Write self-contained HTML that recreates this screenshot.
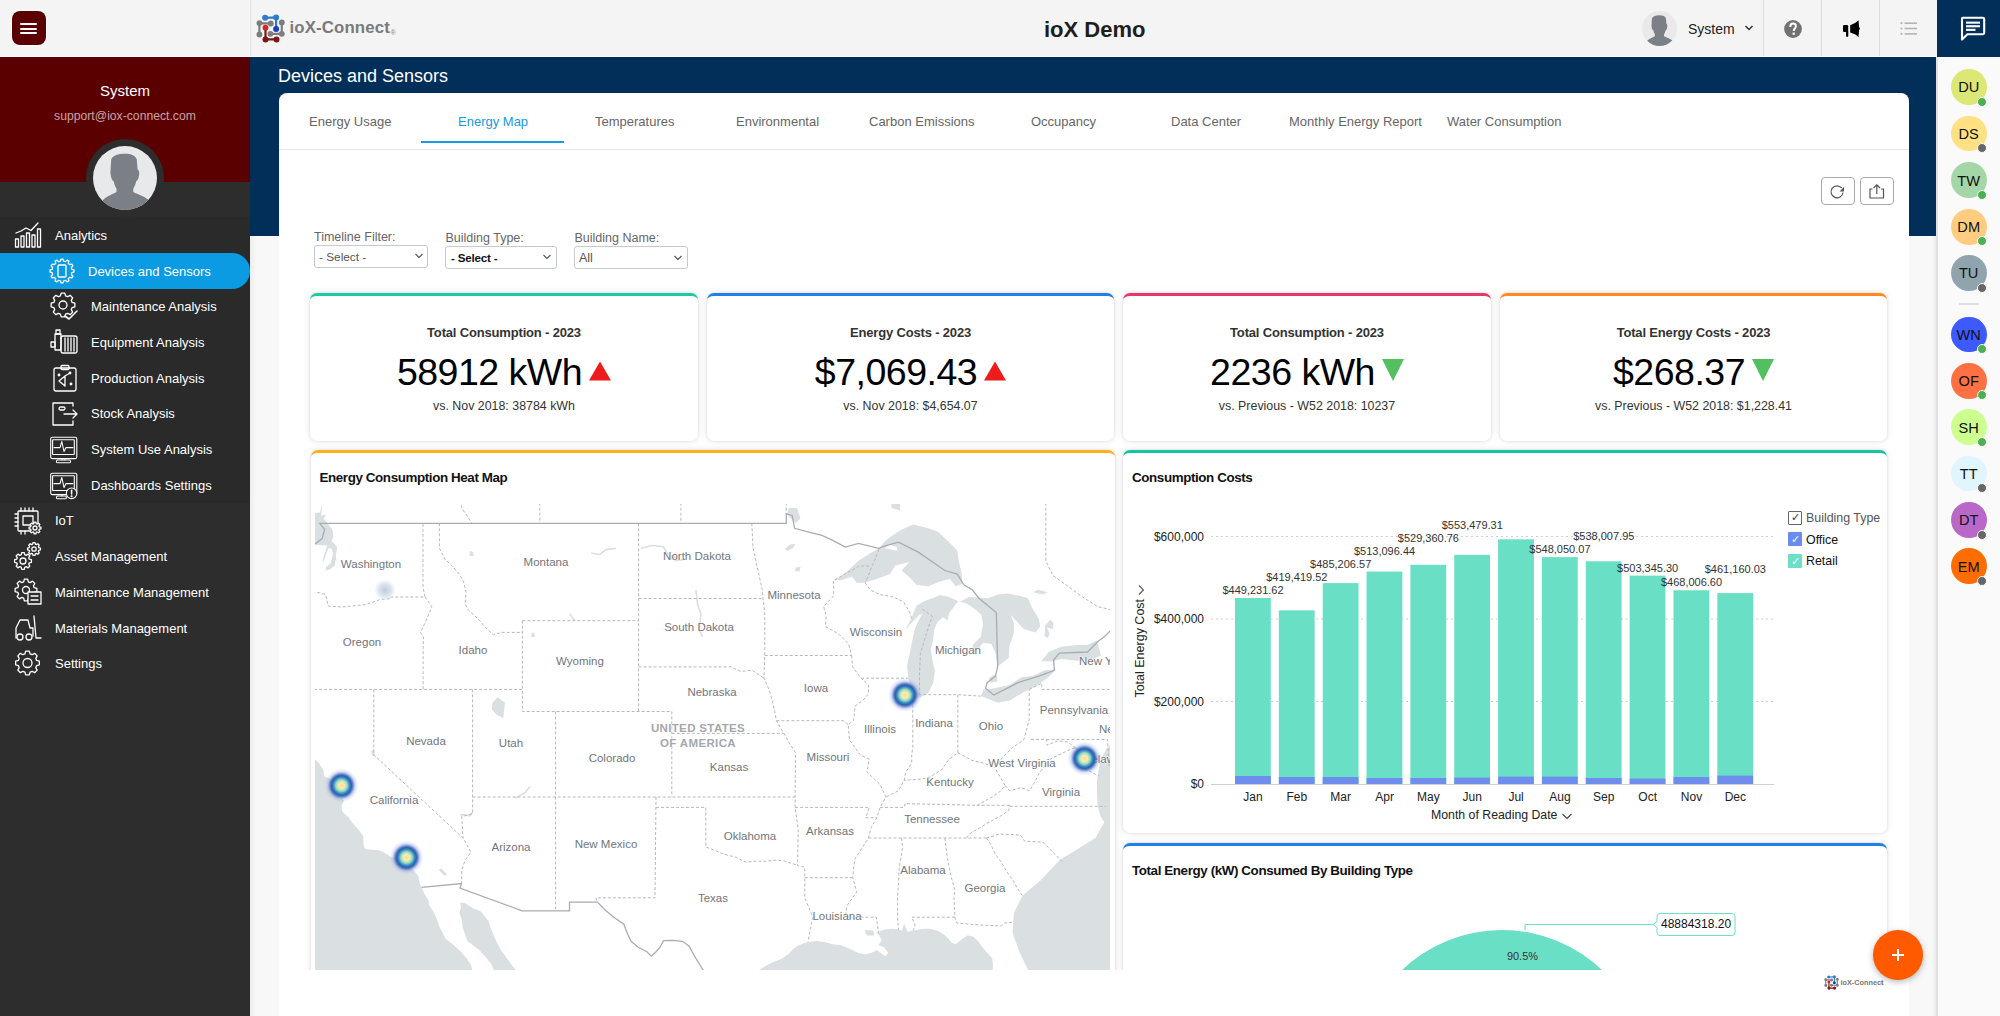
<!DOCTYPE html>
<html><head><meta charset="utf-8">
<style>
*{box-sizing:border-box;margin:0;padding:0}
html,body{width:2000px;height:1016px;overflow:hidden;background:#fff;font-family:"Liberation Sans",sans-serif}
.a{position:absolute}
.t{position:absolute;white-space:nowrap;line-height:1}
#hdr{left:0;top:0;width:1937px;height:56px;background:#f4f4f4}
#side{left:0;top:57px;width:250px;height:959px;background:#2d2d2d}
#banner{left:250px;top:57px;width:1687px;height:179px;background:#022f5a}
#rail{left:1937px;top:57px;width:63px;height:959px;background:#fafafa}
.card{position:absolute;background:#fff;border-radius:7px;box-shadow:0 0 3px rgba(0,0,0,.12),0 0 9px rgba(0,0,0,.08)}
.kt{font-weight:bold;font-size:13px;letter-spacing:-0.17px;color:#333;text-align:center;left:0;right:0}
.kv{font-size:37.5px;letter-spacing:-0.5px;color:#000;left:0;right:0;text-align:center}
.ks{font-size:12.4px;color:#333;left:0;right:0;text-align:center}
.tab{position:absolute;top:115px;font-size:13px;color:#666;white-space:nowrap;line-height:1}
.ml{position:absolute;width:120px;text-align:center;font-size:11.5px;color:#72767c;white-space:nowrap;line-height:1;text-shadow:0 0 2px #fff,0 0 2px #fff}
.us{font-weight:bold;letter-spacing:0.35px;color:#a3a8ad}
.mi{position:absolute;color:#fff;font-size:13px;white-space:nowrap;line-height:1}
</style></head><body>
<div class="a" id="hdr"></div>
<div class="a" style="left:0;top:56px;width:1937px;height:1px;background:#fff"></div>
<div class="a" id="side"></div>
<div class="a" style="left:0;top:57px;width:250px;height:125px;background:#5a0000"></div>
<div class="a" style="left:0;top:217px;width:250px;height:286px;background:#2a2a2a"></div>
<div class="a" id="banner"></div>
<div class="a" id="rail"></div>
<div class="a" style="left:1937px;top:0;width:63px;height:57px;background:#022f5a"></div>


<!-- header contents -->
<div class="a" style="left:12px;top:11px;width:34px;height:34px;background:#5a0000;border-radius:8px;box-shadow:0 0 0 1px #fff"></div>
<div class="a" style="left:20px;top:23px;width:17px;height:2px;background:#fff;border-radius:1px"></div>
<div class="a" style="left:20px;top:27.5px;width:17px;height:2px;background:#fff;border-radius:1px"></div>
<div class="a" style="left:20px;top:32px;width:17px;height:2px;background:#fff;border-radius:1px"></div>
<div class="a" style="left:250px;top:0;width:2px;height:56px;background:linear-gradient(90deg,#e0e0e0,#f4f4f4)"></div>
<svg class="a" style="left:252px;top:10px" width="38" height="36" viewBox="0 0 38 36"><g stroke-width="2.2" fill="none"><path d="M7.4 13.1 L18.8 13.5 M7.4 13.1 L7.4 24.5 M29.8 12.4 L29.8 23.8 L18.4 23.8" stroke="#7d7d7d"/><path d="M13.1 7.8 L24.1 7.4 L24.1 19.1" stroke="#2f78c8"/><path d="M13.5 17.7 L13.5 29.4 L24.5 29.4" stroke="#7a1616"/></g><g fill="#7d7d7d"><circle cx="7.4" cy="13.1" r="2.9"/><circle cx="18.8" cy="13.5" r="2.9"/><circle cx="7.4" cy="24.5" r="2.9"/><circle cx="29.8" cy="12.4" r="2.9"/><circle cx="29.8" cy="23.8" r="2.9"/><circle cx="18.4" cy="23.8" r="2.9"/></g><circle cx="13.1" cy="7.8" r="3" fill="#2f7ccf"/><circle cx="24.1" cy="7.4" r="3" fill="#2f7ccf"/><circle cx="24.1" cy="19.1" r="3" fill="#1b3fc0"/><circle cx="13.5" cy="17.7" r="2.9" fill="#d42424"/><circle cx="13.5" cy="29.4" r="3" fill="#7a1616"/><circle cx="24.5" cy="29.4" r="3" fill="#7a1616"/></svg>
<div class="t" style="left:289.5px;top:20px;font-size:16.8px;font-weight:bold;color:#7a7a7a;letter-spacing:0.15px">ioX-Connect</div>
<div class="t" style="left:390.5px;top:28.5px;font-size:7px;color:#888">&reg;</div>
<div class="t" style="left:1044px;top:18.5px;font-size:22px;font-weight:bold;color:#1e1e1e">ioX Demo</div>
<!-- user -->
<div class="a" style="left:1642px;top:11px;width:35px;height:35px;border-radius:50%;background:#e9e9eb;overflow:hidden">
 <svg width="35" height="35" viewBox="0 0 64 64"><path d="M18.2 13.5 C20 9.5 25 7.8 32 7.8 C38.5 7.8 42.5 9.8 43.8 13.5 L44.6 23.5 C46.3 24.2 46.6 27 46 29.5 C45.6 32.5 44.6 34.5 43.2 35.2 C42.6 38 41.6 40.5 40.3 42.5 L40.3 46 C45 48.5 52 50.5 57 55 L64 64 L0 64 L9 55 C13 50.5 19 48.5 23.5 46 L23.5 42.5 C22.2 40.5 21.2 38 20.6 35.2 C19.2 34.5 18.2 32.5 17.8 29.5 C17.2 27 17.5 24.2 17.6 23.5 Z" fill="#7b7f86"/></svg>
</div>
<div class="t" style="left:1688px;top:22px;font-size:14px;color:#222">System</div>
<svg class="a" style="left:1744px;top:24px" width="10" height="8" viewBox="0 0 10 8"><path d="M1.5 2 L5 5.5 L8.5 2" stroke="#333" stroke-width="1.5" fill="none"/></svg>
<div class="a" style="left:1763px;top:0;width:1px;height:56px;background:#dcdcdc"></div>
<div class="a" style="left:1821px;top:0;width:1px;height:56px;background:#dcdcdc"></div>
<div class="a" style="left:1879px;top:0;width:1px;height:56px;background:#dcdcdc"></div>
<svg class="a" style="left:1783.8px;top:19.6px" width="18" height="18" viewBox="0 0 18 18"><circle cx="9" cy="9" r="8.9" fill="#727272"/><path d="M6.3 7 C6.3 4.9 7.6 3.6 9.1 3.6 C10.8 3.6 11.9 4.7 11.9 6.3 C11.9 8.3 9.7 8.6 9.7 11" fill="none" stroke="#fff" stroke-width="2"/><rect x="8.6" y="12.6" width="2.2" height="2.2" fill="#fff"/></svg>

<svg class="a" style="left:1842px;top:19px" width="19" height="19" viewBox="0 0 19 19"><rect x="1" y="6" width="5.2" height="7" rx="1.3" fill="#000"/><rect x="4" y="11.5" width="2.3" height="6.4" rx="1.1" fill="#000"/><path d="M8.2 6.3 L13.5 3.8 L16.5 1.3 L17.1 8 L18 9.5 L17.1 11 L16.5 18.2 L13.5 15.6 L8.2 13.6 Z" fill="#000"/></svg>
<svg class="a" style="left:1900px;top:21px" width="18" height="15" viewBox="0 0 18 15"><g fill="#b5b5b5"><circle cx="1.5" cy="2.2" r="1.1"/><circle cx="1.5" cy="7.5" r="1.1"/><circle cx="1.5" cy="12.9" r="1.1"/><rect x="4.6" y="1.4" width="12.4" height="1.6"/><rect x="4.6" y="6.7" width="12.4" height="1.6"/><rect x="4.6" y="12.1" width="12.4" height="1.6"/></g></svg>
<svg class="a" style="left:1960px;top:15.5px" width="26" height="26" viewBox="0 0 26 26"><path d="M3 1.8 L22.8 1.8 Q24.2 1.8 24.2 3.2 L24.2 16.8 Q24.2 18.2 22.8 18.2 L7.4 18.2 L2 23.6 L2 2.8 Q2 1.8 3 1.8 Z" fill="none" stroke="#fff" stroke-width="2.1" stroke-linejoin="round"/><rect x="6" y="5.6" width="14" height="2.1" fill="#fff"/><rect x="6" y="9.2" width="14" height="2.1" fill="#fff"/><rect x="6" y="12.8" width="9.5" height="2.1" fill="#fff"/></svg>


<!-- sidebar -->
<div class="t" style="left:0;width:250px;text-align:center;top:82.5px;font-size:15px;color:#fff">System</div>
<div class="t" style="left:0;width:250px;text-align:center;top:109.5px;font-size:12.2px;color:#c9a3a3">support@iox-connect.com</div>
<div class="a" style="left:86px;top:139px;width:78px;height:78px;border-radius:50%;background:#2d2d2d"></div>
<div class="a" style="left:93px;top:146px;width:64px;height:64px;border-radius:50%;background:#e8e9eb;overflow:hidden">
 <svg width="64" height="64" viewBox="0 0 64 64"><path d="M18.2 13.5 C20 9.5 25 7.8 32 7.8 C38.5 7.8 42.5 9.8 43.8 13.5 L44.6 23.5 C46.3 24.2 46.6 27 46 29.5 C45.6 32.5 44.6 34.5 43.2 35.2 C42.6 38 41.6 40.5 40.3 42.5 L40.3 46 C45 48.5 52 50.5 57 55 L64 64 L0 64 L9 55 C13 50.5 19 48.5 23.5 46 L23.5 42.5 C22.2 40.5 21.2 38 20.6 35.2 C19.2 34.5 18.2 32.5 17.8 29.5 C17.2 27 17.5 24.2 17.6 23.5 Z" fill="#7b7f86"/></svg>
</div>
<div class="a" style="left:0;top:253px;width:250px;height:36px;background:#0a9be3;border-radius:0 18px 18px 0"></div>
<div class="mi" style="left:55px;top:229px">Analytics</div>
<div class="mi" style="left:88px;top:265px">Devices and Sensors</div>
<div class="mi" style="left:91px;top:300px">Maintenance Analysis</div>
<div class="mi" style="left:91px;top:336px">Equipment Analysis</div>
<div class="mi" style="left:91px;top:372px">Production Analysis</div>
<div class="mi" style="left:91px;top:407px">Stock Analysis</div>
<div class="mi" style="left:91px;top:443px">System Use Analysis</div>
<div class="mi" style="left:91px;top:479px">Dashboards Settings</div>
<div class="mi" style="left:55px;top:514px">IoT</div>
<div class="mi" style="left:55px;top:550px">Asset Management</div>
<div class="mi" style="left:55px;top:586px">Maintenance Management</div>
<div class="mi" style="left:55px;top:622px">Materials Management</div>
<div class="mi" style="left:55px;top:657px">Settings</div>
<svg class="a" style="left:14px;top:221px" width="28" height="28" viewBox="0 0 28 28" fill="none" stroke="#fff" stroke-width="1.3" stroke-linecap="round" stroke-linejoin="round"><rect x="1.5" y="18" width="3" height="8"/><rect x="7" y="15" width="3" height="11"/><rect x="12.5" y="12" width="3" height="14"/><rect x="18" y="14" width="3" height="12"/><rect x="23.5" y="8" width="3" height="18"/><path d="M2 12 L7 10 L12 7 L17 9.5 L24 2"/></svg>
<svg class="a" style="left:48px;top:257px" width="28" height="28" viewBox="0 0 28 28" fill="none" stroke="#fff" stroke-width="1.3" stroke-linecap="round" stroke-linejoin="round"><path d="M23.88 12.44 L25.96 12.96 L25.96 15.04 L23.88 15.56 L23.34 17.58 L24.87 19.08 L23.84 20.87 L21.77 20.29 L20.29 21.77 L20.87 23.84 L19.08 24.87 L17.58 23.34 L15.56 23.88 L15.04 25.96 L12.96 25.96 L12.44 23.88 L10.42 23.34 L8.92 24.87 L7.13 23.84 L7.71 21.77 L6.23 20.29 L4.16 20.87 L3.13 19.08 L4.66 17.58 L4.12 15.56 L2.04 15.04 L2.04 12.96 L4.12 12.44 L4.66 10.42 L3.13 8.92 L4.16 7.13 L6.23 7.71 L7.71 6.23 L7.13 4.16 L8.92 3.13 L10.42 4.66 L12.44 4.12 L12.96 2.04 L15.04 2.04 L15.56 4.12 L17.58 4.66 L19.08 3.13 L20.87 4.16 L20.29 6.23 L21.77 7.71 L23.84 7.13 L24.87 8.92 L23.34 10.42Z"/><rect x="10" y="8" width="8" height="12" rx="1"/></svg>
<svg class="a" style="left:50px;top:292px" width="28" height="28" viewBox="0 0 28 28" fill="none" stroke="#fff" stroke-width="1.3" stroke-linecap="round" stroke-linejoin="round"><path d="M22.14 10.42 L24.86 11.19 L24.86 14.81 L22.14 15.58 L21.29 17.64 L22.67 20.11 L20.11 22.67 L17.64 21.29 L15.58 22.14 L14.81 24.86 L11.19 24.86 L10.42 22.14 L8.36 21.29 L5.89 22.67 L3.33 20.11 L4.71 17.64 L3.86 15.58 L1.14 14.81 L1.14 11.19 L3.86 10.42 L4.71 8.36 L3.33 5.89 L5.89 3.33 L8.36 4.71 L10.42 3.86 L11.19 1.14 L14.81 1.14 L15.58 3.86 L17.64 4.71 L20.11 3.33 L22.67 5.89 L21.29 8.36Z"/><circle cx="13" cy="13" r="4"/><path d="M15 24 L19 27 L27 19" stroke-width="1.6"/></svg>
<svg class="a" style="left:50px;top:328px" width="28" height="28" viewBox="0 0 28 28" fill="none" stroke="#fff" stroke-width="1.3" stroke-linecap="round" stroke-linejoin="round"><rect x="11" y="8" width="16" height="17" rx="2"/><path d="M15 10 L15 23 M18 10 L18 23 M21 10 L21 23 M24 10 L24 23"/><rect x="5" y="6" width="6" height="16"/><rect x="1" y="14" width="4" height="5"/><rect x="6" y="2" width="4" height="4"/></svg>
<svg class="a" style="left:51px;top:364px" width="28" height="28" viewBox="0 0 28 28" fill="none" stroke="#fff" stroke-width="1.3" stroke-linecap="round" stroke-linejoin="round"><rect x="3" y="4" width="22" height="23" rx="2"/><rect x="10" y="1.5" width="8" height="4" rx="1"/><path d="M8 17 L14 12 L19 9 M14 12 L14 22 M8 17 L14 22"/><circle cx="19" cy="9" r="0.8"/><circle cx="8" cy="11" r="0.8"/><circle cx="20" cy="20" r="0.8"/></svg>
<svg class="a" style="left:51px;top:400px" width="28" height="28" viewBox="0 0 28 28" fill="none" stroke="#fff" stroke-width="1.3" stroke-linecap="round" stroke-linejoin="round"><path d="M22 6 L22 3 L2 3 L2 25 L22 25 L22 21"/><rect x="8" y="7" width="6" height="3" rx="1.5"/><path d="M13 14 L26 14 M22 10 L26 14 L22 18"/></svg>
<svg class="a" style="left:50px;top:436px" width="28" height="28" viewBox="0 0 28 28" fill="none" stroke="#fff" stroke-width="1.1" stroke-linecap="round" stroke-linejoin="round"><rect x="0.7" y="1.2" width="26.1" height="21.4" rx="1.5"/><rect x="2.6" y="3.7" width="21.7" height="14.8" rx="0.5"/><path d="M4 11.6 L10 11.6 L11.8 5.5 L14 15.5 L16 11.6 L23 11.6"/><path d="M12 22.6 L12 24 M15 22.6 L15 24"/><rect x="6.4" y="24" width="14.2" height="2.8" rx="1.4"/></svg>
<svg class="a" style="left:50px;top:472px" width="30" height="30" viewBox="0 0 30 30" fill="none" stroke="#fff" stroke-width="1.1" stroke-linecap="round" stroke-linejoin="round"><rect x="0.7" y="1.2" width="26.1" height="21.4" rx="1.5"/><rect x="2.6" y="3.7" width="21.7" height="14.8" rx="0.5"/><path d="M4 11.6 L10 11.6 L11.8 5.5 L14 15.5 L16 11.6 L23 11.6"/><path d="M12 22.6 L12 24"/><rect x="6.4" y="24" width="10" height="2.8" rx="1.4"/><circle cx="21.6" cy="21.3" r="5.3" fill="#2a2a2a"/><path d="M21.6 18.3 L21.6 22" stroke-width="1.5"/><circle cx="21.6" cy="24.2" r="0.5" fill="#fff"/></svg>
<svg class="a" style="left:14px;top:507px" width="28" height="28" viewBox="0 0 28 28" fill="none" stroke="#fff" stroke-width="1.3" stroke-linecap="round" stroke-linejoin="round"><rect x="4" y="4" width="20" height="20" rx="1"/><rect x="9" y="9" width="10" height="9"/><path d="M7 1 L7 4 M11 1 L11 4 M15 1 L15 4 M19 1 L19 4 M1 7 L4 7 M1 11 L4 11 M1 15 L4 15 M1 19 L4 19 M7 24 L7 27 M11 24 L11 27"/><path d="M25.33 19.78 L26.93 20.10 L26.93 21.90 L25.33 22.22 L24.93 23.20 L25.83 24.56 L24.56 25.83 L23.20 24.93 L22.22 25.33 L21.90 26.93 L20.10 26.93 L19.78 25.33 L18.80 24.93 L17.44 25.83 L16.17 24.56 L17.07 23.20 L16.67 22.22 L15.07 21.90 L15.07 20.10 L16.67 19.78 L17.07 18.80 L16.17 17.44 L17.44 16.17 L18.80 17.07 L19.78 16.67 L20.10 15.07 L21.90 15.07 L22.22 16.67 L23.20 17.07 L24.56 16.17 L25.83 17.44 L24.93 18.80Z" fill="#2d2d2d"/><circle cx="21" cy="21" r="2"/></svg>
<svg class="a" style="left:14px;top:542px" width="28" height="28" viewBox="0 0 28 28" fill="none" stroke="#fff" stroke-width="1.3" stroke-linecap="round" stroke-linejoin="round"><path d="M15.26 17.24 L17.40 17.72 L17.40 20.28 L15.26 20.76 L14.67 22.18 L15.85 24.04 L14.04 25.85 L12.18 24.67 L10.76 25.26 L10.28 27.40 L7.72 27.40 L7.24 25.26 L5.82 24.67 L3.96 25.85 L2.15 24.04 L3.33 22.18 L2.74 20.76 L0.60 20.28 L0.60 17.72 L2.74 17.24 L3.33 15.82 L2.15 13.96 L3.96 12.15 L5.82 13.33 L7.24 12.74 L7.72 10.60 L10.28 10.60 L10.76 12.74 L12.18 13.33 L14.04 12.15 L15.85 13.96 L14.67 15.82Z"/><circle cx="9" cy="19" r="3"/><path d="M24.81 5.64 L26.43 6.02 L26.43 7.98 L24.81 8.36 L24.36 9.44 L25.24 10.85 L23.85 12.24 L22.44 11.36 L21.36 11.81 L20.98 13.43 L19.02 13.43 L18.64 11.81 L17.56 11.36 L16.15 12.24 L14.76 10.85 L15.64 9.44 L15.19 8.36 L13.57 7.98 L13.57 6.02 L15.19 5.64 L15.64 4.56 L14.76 3.15 L16.15 1.76 L17.56 2.64 L18.64 2.19 L19.02 0.57 L20.98 0.57 L21.36 2.19 L22.44 2.64 L23.85 1.76 L25.24 3.15 L24.36 4.56Z"/><circle cx="20" cy="7" r="2.2"/></svg>
<svg class="a" style="left:14px;top:578px" width="28" height="28" viewBox="0 0 28 28" fill="none" stroke="#fff" stroke-width="1.3" stroke-linecap="round" stroke-linejoin="round"><path d="M20.18 9.69 L22.87 10.34 L22.87 13.66 L20.18 14.31 L19.42 16.15 L20.86 18.52 L18.52 20.86 L16.15 19.42 L14.31 20.18 L13.66 22.87 L10.34 22.87 L9.69 20.18 L7.85 19.42 L5.48 20.86 L3.14 18.52 L4.58 16.15 L3.82 14.31 L1.13 13.66 L1.13 10.34 L3.82 9.69 L4.58 7.85 L3.14 5.48 L5.48 3.14 L7.85 4.58 L9.69 3.82 L10.34 1.13 L13.66 1.13 L14.31 3.82 L16.15 4.58 L18.52 3.14 L20.86 5.48 L19.42 7.85Z"/><circle cx="12" cy="12" r="3.5"/><rect x="14" y="14" width="13" height="12" fill="#2d2d2d"/><path d="M17 18 L24 18 M17 22 L24 22"/></svg>
<svg class="a" style="left:14px;top:614px" width="28" height="28" viewBox="0 0 28 28" fill="none" stroke="#fff" stroke-width="1.3" stroke-linecap="round" stroke-linejoin="round"><path d="M2 24 L2 14 L6 6 L14 6 L16 14 L19 14 L19 22"/><circle cx="6" cy="23" r="3"/><circle cx="15" cy="23" r="3"/><path d="M20 2 L22 24 L27 24"/></svg>
<svg class="a" style="left:15px;top:650px" width="28" height="28" viewBox="0 0 28 28" fill="none" stroke="#fff" stroke-width="1.3" stroke-linecap="round" stroke-linejoin="round"><path d="M21.64 10.42 L24.36 11.19 L24.36 14.81 L21.64 15.58 L20.79 17.64 L22.17 20.11 L19.61 22.67 L17.14 21.29 L15.08 22.14 L14.31 24.86 L10.69 24.86 L9.92 22.14 L7.86 21.29 L5.39 22.67 L2.83 20.11 L4.21 17.64 L3.36 15.58 L0.64 14.81 L0.64 11.19 L3.36 10.42 L4.21 8.36 L2.83 5.89 L5.39 3.33 L7.86 4.71 L9.92 3.86 L10.69 1.14 L14.31 1.14 L15.08 3.86 L17.14 4.71 L19.61 3.33 L22.17 5.89 L20.79 8.36Z"/><circle cx="12.5" cy="13" r="4.5"/></svg>

<div class="a" style="left:250px;top:236px;width:1687px;height:780px;background:#f8f8f8"></div>
<div class="a" style="left:250px;top:236px;width:6px;height:780px;background:linear-gradient(90deg,#ececec,#f8f8f8)"></div>
<div class="a" style="left:1932px;top:236px;width:5px;height:780px;background:linear-gradient(90deg,#f8f8f8,#e8e8e8)"></div>
<div class="t" style="left:278px;top:67px;font-size:18px;color:#fff">Devices and Sensors</div>
<div class="a" style="left:1936px;top:57px;width:2px;height:959px;background:#e2e2e2"></div>
<div class="a" style="left:1950.8px;top:69.1px;width:35.8px;height:35.8px;border-radius:50%;background:#dce775"></div><div class="t" style="left:1950.8px;width:35.8px;text-align:center;top:80.3px;font-size:14.6px;color:#111">DU</div><div class="a" style="left:1977.2px;top:96.5px;width:10px;height:10px;border-radius:50%;background:#4caf50;border:1.2px solid #fafafa"></div>
<div class="a" style="left:1950.8px;top:115.6px;width:35.8px;height:35.8px;border-radius:50%;background:#ffe082"></div><div class="t" style="left:1950.8px;width:35.8px;text-align:center;top:126.8px;font-size:14.6px;color:#111">DS</div><div class="a" style="left:1977.2px;top:143.0px;width:10px;height:10px;border-radius:50%;background:#666;border:1.2px solid #fafafa"></div>
<div class="a" style="left:1950.8px;top:162.4px;width:35.8px;height:35.8px;border-radius:50%;background:#a5d6a7"></div><div class="t" style="left:1950.8px;width:35.8px;text-align:center;top:173.6px;font-size:14.6px;color:#111">TW</div><div class="a" style="left:1977.2px;top:189.8px;width:10px;height:10px;border-radius:50%;background:#4caf50;border:1.2px solid #fafafa"></div>
<div class="a" style="left:1950.8px;top:208.9px;width:35.8px;height:35.8px;border-radius:50%;background:#ffcc80"></div><div class="t" style="left:1950.8px;width:35.8px;text-align:center;top:220.1px;font-size:14.6px;color:#111">DM</div><div class="a" style="left:1977.2px;top:236.3px;width:10px;height:10px;border-radius:50%;background:#4caf50;border:1.2px solid #fafafa"></div>
<div class="a" style="left:1950.8px;top:255.1px;width:35.8px;height:35.8px;border-radius:50%;background:#90a4ae"></div><div class="t" style="left:1950.8px;width:35.8px;text-align:center;top:266.3px;font-size:14.6px;color:#111">TU</div><div class="a" style="left:1977.2px;top:282.5px;width:10px;height:10px;border-radius:50%;background:#666;border:1.2px solid #fafafa"></div>
<div class="a" style="left:1950.8px;top:316.6px;width:35.8px;height:35.8px;border-radius:50%;background:#3d5afe"></div><div class="t" style="left:1950.8px;width:35.8px;text-align:center;top:327.8px;font-size:14.6px;color:#111">WN</div><div class="a" style="left:1977.2px;top:344.0px;width:10px;height:10px;border-radius:50%;background:#4caf50;border:1.2px solid #fafafa"></div>
<div class="a" style="left:1950.8px;top:362.8px;width:35.8px;height:35.8px;border-radius:50%;background:#ff7043"></div><div class="t" style="left:1950.8px;width:35.8px;text-align:center;top:374.0px;font-size:14.6px;color:#111">OF</div><div class="a" style="left:1977.2px;top:390.2px;width:10px;height:10px;border-radius:50%;background:#4caf50;border:1.2px solid #fafafa"></div>
<div class="a" style="left:1950.8px;top:409.40000000000003px;width:35.8px;height:35.8px;border-radius:50%;background:#ccff90"></div><div class="t" style="left:1950.8px;width:35.8px;text-align:center;top:420.6px;font-size:14.6px;color:#111">SH</div><div class="a" style="left:1977.2px;top:436.8px;width:10px;height:10px;border-radius:50%;background:#4caf50;border:1.2px solid #fafafa"></div>
<div class="a" style="left:1950.8px;top:455.70000000000005px;width:35.8px;height:35.8px;border-radius:50%;background:#e1f5fe"></div><div class="t" style="left:1950.8px;width:35.8px;text-align:center;top:466.9px;font-size:14.6px;color:#111">TT</div><div class="a" style="left:1977.2px;top:483.1px;width:10px;height:10px;border-radius:50%;background:#666;border:1.2px solid #fafafa"></div>
<div class="a" style="left:1950.8px;top:502.1px;width:35.8px;height:35.8px;border-radius:50%;background:#ba68c8"></div><div class="t" style="left:1950.8px;width:35.8px;text-align:center;top:513.3px;font-size:14.6px;color:#111">DT</div><div class="a" style="left:1977.2px;top:529.5px;width:10px;height:10px;border-radius:50%;background:#666;border:1.2px solid #fafafa"></div>
<div class="a" style="left:1950.8px;top:548.4px;width:35.8px;height:35.8px;border-radius:50%;background:#ff6d00"></div><div class="t" style="left:1950.8px;width:35.8px;text-align:center;top:559.6px;font-size:14.6px;color:#111">EM</div><div class="a" style="left:1977.2px;top:575.8px;width:10px;height:10px;border-radius:50%;background:#666;border:1.2px solid #fafafa"></div>
<div class="a" style="left:1959px;top:303px;width:20px;height:1.5px;background:#e0e0e0"></div>
<!-- main card -->
<div class="a" style="left:278.7px;top:93px;width:1630px;height:940px;background:#fff;border-radius:8px"></div>
<div class="a" style="left:278.7px;top:149px;width:1630px;height:1px;background:#e6e6e6"></div>


<!-- tabs -->
<div class="tab" style="left:309px">Energy Usage</div>
<div class="tab" style="left:458px;color:#1a9ae0">Energy Map</div>
<div class="tab" style="left:595px">Temperatures</div>
<div class="tab" style="left:736px">Environmental</div>
<div class="tab" style="left:869px">Carbon Emissions</div>
<div class="tab" style="left:1031px">Occupancy</div>
<div class="tab" style="left:1171px">Data Center</div>
<div class="tab" style="left:1289px">Monthly Energy Report</div>
<div class="tab" style="left:1447px">Water Consumption</div>
<div class="a" style="left:421px;top:140.5px;width:143px;height:2px;background:#1a9ae0"></div>
<!-- buttons -->
<div class="a" style="left:1821px;top:177px;width:34px;height:28px;border:1.5px solid #aaa;border-radius:4px"></div>
<div class="a" style="left:1860px;top:177px;width:34px;height:28px;border:1.5px solid #aaa;border-radius:4px"></div>
<svg class="a" style="left:1829px;top:183px" width="18" height="18" viewBox="0 0 18 18"><path d="M14 9.5 A6 6 0 1 1 12.8 5.2" fill="none" stroke="#555" stroke-width="1.2"/><path d="M15 4 L15 8.5 L10.5 8.5 Z" fill="#555"/></svg>
<svg class="a" style="left:1868px;top:183px" width="18" height="18" viewBox="0 0 18 18"><path d="M4.5 6 L2 6 L2 15 L15.5 15 L15.5 6 L13 6" fill="none" stroke="#555" stroke-width="1.2"/><path d="M8.8 11 L8.8 2 M5.5 5 L8.8 1.8 L12 5" fill="none" stroke="#555" stroke-width="1.2"/></svg>
<!-- filters -->
<div class="t" style="left:314px;top:231px;font-size:12.5px;color:#666">Timeline Filter:</div>
<div class="t" style="left:445.5px;top:231.5px;font-size:12.5px;color:#666">Building Type:</div>
<div class="t" style="left:574.5px;top:231.5px;font-size:12.5px;color:#666">Building Name:</div>
<div class="a" style="left:314px;top:245px;width:114px;height:23px;border:1px solid #c5c9d2;border-radius:3px"></div>
<div class="a" style="left:445px;top:246px;width:111.5px;height:22.5px;border:1px solid #c5c9d2;border-radius:3px"></div>
<div class="a" style="left:574px;top:246px;width:114px;height:22.5px;border:1px solid #c5c9d2;border-radius:3px"></div>
<div class="t" style="left:319px;top:251.5px;font-size:11.8px;color:#555">- Select -</div>
<div class="t" style="left:451px;top:252px;font-size:11.6px;color:#111;font-weight:bold;letter-spacing:-0.2px">- Select -</div>
<div class="t" style="left:579px;top:251.5px;font-size:12.5px;color:#555">All</div>
<svg class="a" style="left:414px;top:252px" width="10" height="8" viewBox="0 0 10 8"><path d="M1.5 2 L5 5.5 L8.5 2" stroke="#555" stroke-width="1.1" fill="none"/></svg>
<svg class="a" style="left:542px;top:253px" width="10" height="8" viewBox="0 0 10 8"><path d="M1.5 2 L5 5.5 L8.5 2" stroke="#555" stroke-width="1.1" fill="none"/></svg>
<svg class="a" style="left:673px;top:254px" width="10" height="8" viewBox="0 0 10 8"><path d="M1.5 2 L5 5.5 L8.5 2" stroke="#555" stroke-width="1.1" fill="none"/></svg>
<div class="card" style="left:310px;top:293px;width:388px;height:148px;border-top:3px solid #1ec9a4">
 <div class="t kt" style="top:30px">Total Consumption - 2023</div>
 <div class="t kv" style="top:57.5px">58912 kWh<svg width="22" height="20" viewBox="0 0 22 20" style="display:inline-block;vertical-align:0;margin-left:7px;position:relative;top:-3.5px"><path d="M11 0.5 L22 19.5 L0 19.5 Z" fill="#ee1c1c"/></svg></div>
 <div class="t ks" style="top:104px">vs. Nov 2018: 38784 kWh</div>
</div>
<div class="card" style="left:707px;top:293px;width:407px;height:148px;border-top:3px solid #1f80e8">
 <div class="t kt" style="top:30px">Energy Costs - 2023</div>
 <div class="t kv" style="top:57.5px">$7,069.43<svg width="22" height="20" viewBox="0 0 22 20" style="display:inline-block;vertical-align:0;margin-left:7px;position:relative;top:-3.5px"><path d="M11 0.5 L22 19.5 L0 19.5 Z" fill="#ee1c1c"/></svg></div>
 <div class="t ks" style="top:104px">vs. Nov 2018: $4,654.07</div>
</div>
<div class="card" style="left:1123px;top:293px;width:368px;height:148px;border-top:3px solid #e8386a">
 <div class="t kt" style="top:30px">Total Consumption - 2023</div>
 <div class="t kv" style="top:57.5px">2236 kWh<svg width="22" height="22" viewBox="0 0 22 22" style="display:inline-block;vertical-align:0;margin-left:7px;position:relative;top:-3.5px"><path d="M0 0 L22 0 L11 22 Z" fill="#52c05e"/></svg></div>
 <div class="t ks" style="top:104px">vs. Previous - W52 2018: 10237</div>
</div>
<div class="card" style="left:1500px;top:293px;width:387px;height:148px;border-top:3px solid #ff8a22">
 <div class="t kt" style="top:30px">Total Energy Costs - 2023</div>
 <div class="t kv" style="top:57.5px">$268.37<svg width="22" height="22" viewBox="0 0 22 22" style="display:inline-block;vertical-align:0;margin-left:7px;position:relative;top:-3.5px"><path d="M0 0 L22 0 L11 22 Z" fill="#52c05e"/></svg></div>
 <div class="t ks" style="top:104px">vs. Previous - W52 2018: $1,228.41</div>
</div>

<!-- dashboard clip -->
<div class="a" style="left:278px;top:445px;width:1631px;height:525px;overflow:hidden">
 <div class="card" style="left:32.5px;top:5px;width:804px;height:560px;border-top:3px solid #ffb21e"></div>
 <div class="card" style="left:845px;top:5px;width:764px;height:383px;border-top:3px solid #16c3a2"></div>
 <div class="card" style="left:845px;top:398px;width:764px;height:300px;border-top:3px solid #1f80e8"></div>
 <div id="mapwrap" class="a" style="left:37px;top:59px;width:795px;height:470px;overflow:hidden;background:#fff"></div>
 <div class="a" style="left:0;top:0;width:1631px;height:525px" id="dash"></div>
</div>
<!--MAP--><svg class="a" style="left:315px;top:504px" width="795" height="466" viewBox="315 504 795 466">
<defs><radialGradient id="hs"><stop offset="0" stop-color="#fddc9a"/><stop offset="0.18" stop-color="#fbeab2"/><stop offset="0.34" stop-color="#8fdcc0"/><stop offset="0.46" stop-color="#3f92c4"/><stop offset="0.58" stop-color="#2a5eb2"/><stop offset="0.68" stop-color="#3f66bb" stop-opacity="0.75"/><stop offset="0.82" stop-color="#7f9ade" stop-opacity="0.3"/><stop offset="1" stop-color="#a0b4e8" stop-opacity="0"/></radialGradient><radialGradient id="hs2"><stop offset="0" stop-color="#b8c4dc" stop-opacity="0.9"/><stop offset="0.6" stop-color="#c8d2e6" stop-opacity="0.6"/><stop offset="1" stop-color="#dde4f0" stop-opacity="0"/></radialGradient></defs>
<path d="M299.1 744.2L311.9 755.9L319.1 763.4L323.2 769.8L324.0 776.3L329.0 778.2L332.0 780.3L332.3 786.6L334.0 792.8L339.8 798.1L342.3 797.6L344.0 801.2L341.5 805.3L342.3 811.5L348.9 817.7L353.9 824.8L358.9 829.9L363.0 836.0L363.5 843.1L363.9 847.1L366.0 849.2L373.8 849.8L378.8 850.2L385.5 853.2L391.3 857.2L397.1 857.8L399.6 859.2L400.1 863.2L404.5 863.8L408.7 866.2L413.7 870.2L418.3 876.1L419.5 883.0L421.6 887.4L424.5 893.9L428.6 900.7L429.4 905.6L434.4 913.4L436.9 919.2L439.4 926.9L442.7 932.7L445.2 938.4L452.7 944.2L461.0 951.8L467.6 959.4L470.9 965.0L473.4 974.5L473.4 993.2L299.1 993.2Z" fill="#dadfe1"/>
<path d="M460.2 902.7L461.0 907.5L459.3 913.4L461.8 919.2L462.6 926.9L465.1 934.6L467.6 941.3L479.2 949.9L485.1 956.5L490.9 963.2L494.2 970.7L506.6 993.2L531.5 993.2L519.9 974.5L511.6 965.0L507.6 959.0L500.8 949.9L495.0 938.4L490.9 928.8L488.4 921.1L480.9 911.4L473.4 908.5L464.3 902.7Z" fill="#dadfe1"/>
<path d="M750.7 993.2L754.0 974.5L759.0 969.9L765.6 966.0L773.1 962.2L782.2 958.4L788.8 953.7L792.2 949.9L797.1 946.1L803.8 943.2L807.9 941.9L817.1 940.9L825.4 942.2L833.7 944.5L840.3 945.1L850.2 948.9L857.7 952.7L865.2 954.6L871.8 952.7L876.8 949.9L881.8 953.7L885.1 956.5L888.4 952.7L883.5 947.0L878.5 945.1L881.8 940.3L879.3 935.5L876.0 932.7L883.5 929.8L891.8 928.8L897.6 929.2L901.7 930.7L904.2 924.0L907.5 931.7L913.3 930.7L923.3 928.8L929.9 928.8L938.2 931.1L944.0 934.6L948.2 938.4L951.5 942.6L955.7 944.2L961.5 939.4L967.3 935.5L973.1 936.5L978.1 941.3L982.2 947.0L987.2 952.7L992.2 958.4L993.0 965.0L992.2 974.5L996.3 993.2L750.7 993.2Z" fill="#dadfe1"/>
<path d="M1034.5 993.2L1027.5 968.4L1020.1 953.5L1012.6 933.2L1013.8 913.2L1022.6 895.6L1040.2 880.7L1060.2 859.4L1075.3 850.6L1095.4 838.0L1105.4 820.3L1110.0 802.8L1137.4 802.8L1137.4 993.2Z" fill="#dadfe1"/>
<path d="M1112.0 744.0L1107.0 748.0L1102.0 757.0L1099.0 768.0L1097.0 780.0L1097.0 792.0L1097.5 805.0L1100.0 815.0L1104.0 822.0L1112.0 822.0Z" fill="#dadfe1"/>
<path d="M837.0 579.0L845.3 572.9L858.6 560.7L870.2 553.3L879.3 548.3L885.1 540.9L890.1 537.1L901.7 529.6L913.3 524.6L928.3 528.3L938.2 532.1L951.5 544.6L957.3 550.8L959.0 561.9L961.5 572.9L962.3 583.8L955.7 586.2L949.9 579.0L939.9 581.4L928.3 586.2L916.7 585.0L910.0 577.8L901.7 570.5L909.2 561.9L895.1 565.6L890.1 574.1L878.5 578.3L865.2 582.6L856.9 583.1L851.9 576.6L839.5 580.7Z" fill="#dadfe1"/>
<path d="M958.5 601.3L949.0 597.0L939.9 595.1L932.4 598.2L924.1 601.3L916.7 605.4L911.7 617.2L905.0 631.2L909.2 625.4L919.1 614.8L922.5 613.6L917.5 623.1L914.2 631.2L912.5 639.4L909.7 653.2L907.0 665.7L908.4 678.2L911.3 691.6L914.2 697.2L920.0 697.8L928.3 692.7L933.2 682.7L934.9 671.4L932.4 660.0L930.8 649.7L933.2 639.4L934.1 630.1L937.4 621.9L943.2 617.2L947.4 620.7L949.0 613.6L954.0 606.6L957.3 602.3Z" fill="#dadfe1"/>
<path d="M959.8 601.8L968.9 597.0L978.1 597.5L988.0 598.2L998.0 594.6L1008.0 593.4L1019.6 595.8L1027.9 598.2L1032.0 607.7L1038.7 618.4L1040.3 626.6L1035.3 632.4L1023.7 628.9L1010.4 614.8L1013.8 623.1L1013.8 633.6L1009.3 646.3L1008.8 657.8L997.7 666.4L995.5 653.2L991.4 644.0L983.1 642.8L979.7 647.4L973.1 653.2L972.8 645.1L980.6 637.0L983.1 624.2L981.4 614.8L974.8 608.9L965.6 603.0Z" fill="#dadfe1"/>
<path d="M1056.1 669.6L1048.6 677.0L1036.2 686.0L1024.6 691.6L1009.6 700.5L998.0 702.7L989.7 699.4L980.6 696.1L983.9 689.4L994.7 688.3L1009.6 684.9L1022.1 677.0L1032.9 675.9L1044.5 670.3Z" fill="#dadfe1"/>
<path d="M1041.2 661.2L1048.6 652.0L1061.1 646.7L1077.7 645.1L1087.6 645.1L1096.8 640.5L1100.9 655.5L1091.0 660.0L1077.7 660.7L1061.1 658.9L1052.8 661.2Z" fill="#dadfe1"/>
<path d="M993.8 674.8L997.2 675.9L997.2 681.5L990.5 682.7L988.9 678.2Z" fill="#dadfe1"/>
<path d="M497.5 697.2L505.0 702.7L504.1 710.4L503.3 718.1L496.7 714.8L491.7 709.3L492.5 702.7Z" fill="#dadfe1"/>
<path d="M864.4 929.8L873.5 930.7L874.3 935.5L866.9 935.5Z" fill="#dadfe1"/>
<path d="M787.2 514.4L795.5 523.3L800.5 518.2L797.1 508.0L788.8 508.0Z" fill="#dadfe1"/>
<path d="M310.0 513.4L319.9 512.6L321.4 507.1L322.2 507.5L320.9 515.7L326.2 514.6L323.5 518.5L327.0 522.8L332.5 529.9L333.3 537.0L331.5 540.9L336.4 545.7L337.2 548.8L335.6 555.1L334.8 565.4L330.1 569.3L325.4 570.6L326.2 566.9L330.9 563.0L333.0 553.5L331.7 548.8L328.5 548.0L324.5 559.0L322.8 563.0L323.2 558.0L327.2 545.5L316.0 545.0L310.0 545.0Z" fill="#dadfe1"/>
<path d="M785.0 549.0L790.0 544.5L795.5 544.0L793.0 548.0L787.0 551.0Z" fill="#dadfe1"/>
<path d="M795.0 571.0L796.0 567.5L800.5 566.8L799.5 571.6Z" fill="#dadfe1"/>
<path d="M668.0 557.0L672.0 555.0L678.0 557.5L673.0 559.5Z" fill="#dadfe1"/>
<path d="M1050.3 619.5L1053.6 623.1L1052.8 628.9L1047.0 627.7L1049.5 633.6L1047.8 638.2L1044.5 635.9L1045.3 625.4Z" fill="#dadfe1"/>
<path d="M1037.8 589.8L1047.8 592.2L1042.8 594.6L1032.9 592.2Z" fill="#dadfe1"/>
<path d="M472.6 552.1L474.3 555.8L469.3 555.8L470.1 550.8Z" fill="#dadfe1"/>
<path d="M534.0 632.4L534.9 637.0L531.5 637.0L531.5 633.6Z" fill="#dadfe1"/>
<path d="M373.8 749.5L375.0 755.9L372.2 755.9L371.3 750.6Z" fill="#dadfe1"/>
<path d="M441.1 868.2L446.9 874.1L445.2 876.1L438.6 870.2Z" fill="#dadfe1"/>
<path d="M891.8 508.0L900.1 510.6L900.1 500.3L890.1 497.7Z" fill="#dadfe1"/>
<path d="M896.7 547.1L897.6 550.8L885.1 548.3L887.6 544.6Z" fill="#fff"/>
<path d="M641.0 548.0L644.0 547.5L652.0 545.5L663.4 546.8L667.5 553.7L675.8 560.6L685.5 559.2" fill="none" stroke="#dadfe1" stroke-width="1.6"/>
<path d="M591.3 553.3L599.6 554.5L606.2 549.6L616.2 548.3" fill="none" stroke="#dadfe1" stroke-width="1.6"/>
<path d="M695.9 589.8L697.5 604.2L700.9 613.6L699.2 630.1L702.5 637.0" fill="none" stroke="#dadfe1" stroke-width="1.6"/>
<path d="M574.7 620.7L569.7 613.6" fill="none" stroke="#dadfe1" stroke-width="1.6"/>
<path d="M514.9 798.1L524.9 792.8L529.9 786.6" fill="none" stroke="#dadfe1" stroke-width="1.6"/>
<path d="M460.2 814.6L470.1 815.6L472.6 812.5" fill="none" stroke="#dadfe1" stroke-width="1.6"/>
<path d="M334.0 550.8L335.6 560.7" fill="none" stroke="#dadfe1" stroke-width="1.6"/>
<path d="M307.4 591.0L319.1 592.7L325.7 594.6L328.2 606.1L342.3 607.0L357.2 605.4L365.5 604.7L380.5 599.4L390.4 598.7L390.8 597.0L425.0 597.0L423.0 587.0L423.0 523.3" fill="none" stroke="#b5b8bc" stroke-width="1" stroke-dasharray="3,2"/>
<path d="M425.0 597.0L431.9 606.6L426.1 620.7L420.3 632.4L423.6 637.0L423.1 648.6L423.1 689.4" fill="none" stroke="#b5b8bc" stroke-width="1" stroke-dasharray="3,2"/>
<path d="M299.1 689.4L522.4 689.4" fill="none" stroke="#b5b8bc" stroke-width="1" stroke-dasharray="3,2"/>
<path d="M373.8 689.4L373.8 754.9L463.0 838.0L470.9 852.2L465.1 860.2L461.8 870.2L461.5 883.6" fill="none" stroke="#b5b8bc" stroke-width="1" stroke-dasharray="3,2"/>
<path d="M472.6 689.4L472.6 813.6L461.8 816.6L463.0 838.0" fill="none" stroke="#b5b8bc" stroke-width="1" stroke-dasharray="3,2"/>
<path d="M439.4 523.3L439.4 548.3L445.2 559.5L451.9 565.6L459.3 574.1L463.5 581.4L466.0 592.2L465.1 604.2L468.5 610.1L477.6 618.4L486.7 628.9L493.4 634.7L501.7 632.4L514.9 632.4L522.4 632.4" fill="none" stroke="#b5b8bc" stroke-width="1" stroke-dasharray="3,2"/>
<path d="M522.4 620.7L522.4 711.5L671.8 711.5L671.8 797.0" fill="none" stroke="#b5b8bc" stroke-width="1" stroke-dasharray="3,2"/>
<path d="M522.4 620.7L638.6 620.7" fill="none" stroke="#b5b8bc" stroke-width="1" stroke-dasharray="3,2"/>
<path d="M638.6 523.3L638.6 711.5" fill="none" stroke="#b5b8bc" stroke-width="1" stroke-dasharray="3,2"/>
<path d="M638.6 598.5L762.9 598.5" fill="none" stroke="#b5b8bc" stroke-width="1" stroke-dasharray="3,2"/>
<path d="M638.6 666.9L730.7 666.9L740.7 671.4L752.3 670.3L763.9 678.2" fill="none" stroke="#b5b8bc" stroke-width="1" stroke-dasharray="3,2"/>
<path d="M555.6 711.5L555.6 910.8" fill="none" stroke="#b5b8bc" stroke-width="1" stroke-dasharray="3,2"/>
<path d="M472.6 797.0L795.1 797.0L795.1 807.4L798.3 829.9L797.5 865.4L804.8 867.2L804.8 877.7L804.8 898.0L808.8 907.5L812.9 917.2L810.4 928.8L807.9 941.9" fill="none" stroke="#b5b8bc" stroke-width="1" stroke-dasharray="3,2"/>
<path d="M671.8 733.4L783.9 733.4" fill="none" stroke="#b5b8bc" stroke-width="1" stroke-dasharray="3,2"/>
<path d="M656.0 797.0L655.0 897.8L595.9 897.8L597.4 902.1" fill="none" stroke="#b5b8bc" stroke-width="1" stroke-dasharray="3,2"/>
<path d="M656.0 807.4L705.8 807.4L705.8 846.9L714.1 850.2L724.1 854.2L735.7 857.2L745.7 862.2L755.6 861.2L765.6 861.2L775.6 860.2L783.9 860.8L797.5 865.4" fill="none" stroke="#b5b8bc" stroke-width="1" stroke-dasharray="3,2"/>
<path d="M751.8 523.3L753.1 548.3L758.5 572.9L762.3 589.8L762.9 598.5L764.8 613.6L764.8 655.5L763.9 678.2L768.9 689.4L772.2 700.5L774.7 711.5L776.4 720.7L783.9 733.4L788.8 742.0L795.5 752.7L795.1 797.0" fill="none" stroke="#b5b8bc" stroke-width="1" stroke-dasharray="3,2"/>
<path d="M764.8 655.5L851.6 655.5L848.6 644.0L839.5 634.7L832.0 630.1L825.4 626.6L826.2 616.0L823.7 606.6L833.7 595.8L833.7 580.2L837.0 579.0" fill="none" stroke="#b5b8bc" stroke-width="1" stroke-dasharray="3,2"/>
<path d="M776.4 720.7L843.6 720.7L848.3 724.7" fill="none" stroke="#b5b8bc" stroke-width="1" stroke-dasharray="3,2"/>
<path d="M851.6 655.5L852.7 666.9L861.0 678.2L868.5 684.9L868.5 693.8L862.7 700.5L855.2 706.0L853.6 720.3L848.3 724.7L849.4 739.9L860.2 754.9L869.3 759.1L866.9 771.9L880.1 784.5L885.9 797.0L880.1 807.4L876.8 817.7L871.0 827.9L868.5 838.0L861.9 848.1L855.2 858.2L853.6 868.2L852.7 877.7L856.9 891.9L846.9 905.6L845.3 917.2L876.3 917.2L878.5 932.7" fill="none" stroke="#b5b8bc" stroke-width="1" stroke-dasharray="3,2"/>
<path d="M795.1 807.4L869.3 807.4L865.7 817.7L876.8 817.7" fill="none" stroke="#b5b8bc" stroke-width="1" stroke-dasharray="3,2"/>
<path d="M804.8 877.7L852.7 877.7" fill="none" stroke="#b5b8bc" stroke-width="1" stroke-dasharray="3,2"/>
<path d="M911.7 618.4L909.2 611.3L903.4 601.8L893.4 597.0L880.1 594.6L870.2 589.8L865.2 583.1" fill="none" stroke="#b5b8bc" stroke-width="1" stroke-dasharray="3,2"/>
<path d="M861.0 678.2L908.4 678.2" fill="none" stroke="#b5b8bc" stroke-width="1" stroke-dasharray="3,2"/>
<path d="M912.8 694.7L912.8 747.4L911.7 754.9L911.7 763.4L905.9 771.9L904.2 780.3L898.4 790.8L885.9 797.0" fill="none" stroke="#b5b8bc" stroke-width="1" stroke-dasharray="3,2"/>
<path d="M918.3 694.7L958.2 694.7L980.6 696.1" fill="none" stroke="#b5b8bc" stroke-width="1" stroke-dasharray="3,2"/>
<path d="M957.8 694.7L957.8 752.7L948.2 760.2L941.6 769.8L929.9 777.1L920.0 779.2L904.2 780.3" fill="none" stroke="#b5b8bc" stroke-width="1" stroke-dasharray="3,2"/>
<path d="M957.8 752.7L971.4 760.2L984.7 763.4L994.7 767.6L1003.0 757.0L1011.3 748.5L1023.7 739.9L1026.2 731.2L1029.2 719.4L1029.2 689.4" fill="none" stroke="#b5b8bc" stroke-width="1" stroke-dasharray="3,2"/>
<path d="M880.1 807.4L904.2 807.4L905.0 803.6L976.9 805.3L992.2 797.0L999.7 791.8L1005.1 785.5L999.7 776.1L994.7 767.6" fill="none" stroke="#b5b8bc" stroke-width="1" stroke-dasharray="3,2"/>
<path d="M868.5 838.0L986.4 838.0" fill="none" stroke="#b5b8bc" stroke-width="1" stroke-dasharray="3,2"/>
<path d="M966.5 838.0L970.6 833.0L979.7 827.9L988.0 822.8L1001.3 815.6L1008.8 810.5L1009.6 805.3" fill="none" stroke="#b5b8bc" stroke-width="1" stroke-dasharray="3,2"/>
<path d="M1009.6 805.3L976.9 805.3" fill="none" stroke="#b5b8bc" stroke-width="1" stroke-dasharray="3,2"/>
<path d="M901.7 838.0L902.5 848.1L899.2 868.2L897.6 897.8L897.6 917.2L898.4 929.8" fill="none" stroke="#b5b8bc" stroke-width="1" stroke-dasharray="3,2"/>
<path d="M944.9 838.0L947.4 858.2L951.5 878.1L954.8 889.9L954.0 897.8L954.8 917.2L956.8 923.0L979.7 925.0L1001.3 925.9L1004.6 923.0L1013.8 922.1" fill="none" stroke="#b5b8bc" stroke-width="1" stroke-dasharray="3,2"/>
<path d="M954.8 917.2L911.7 917.2L915.0 925.0L913.3 930.7" fill="none" stroke="#b5b8bc" stroke-width="1" stroke-dasharray="3,2"/>
<path d="M986.4 838.0L990.5 844.1L995.5 854.2L1001.3 862.2L1007.1 872.1L1012.9 880.1L1017.1 888.0L1023.2 896.8" fill="none" stroke="#b5b8bc" stroke-width="1" stroke-dasharray="3,2"/>
<path d="M986.4 838.0L999.7 834.0L1020.4 835.0L1024.6 841.1L1042.8 842.1L1061.9 861.2" fill="none" stroke="#b5b8bc" stroke-width="1" stroke-dasharray="3,2"/>
<path d="M1009.6 806.3L1105.9 806.3" fill="none" stroke="#b5b8bc" stroke-width="1" stroke-dasharray="3,2"/>
<path d="M1005.1 785.5L1009.6 790.8L1021.2 787.6L1029.5 790.8L1034.5 782.4L1038.7 774.0L1043.6 767.6L1050.3 759.1L1061.1 753.8L1071.9 748.5L1075.7 748.0" fill="none" stroke="#b5b8bc" stroke-width="1" stroke-dasharray="3,2"/>
<path d="M1075.7 748.0L1067.7 742.0L1057.8 740.9L1047.0 745.2L1046.5 739.4L1029.2 739.4" fill="none" stroke="#b5b8bc" stroke-width="1" stroke-dasharray="3,2"/>
<path d="M1046.5 739.4L1107.6 739.4L1109.2 766.6L1120.0 766.6" fill="none" stroke="#b5b8bc" stroke-width="1" stroke-dasharray="3,2"/>
<path d="M1075.7 748.0L1086.0 755.9L1084.3 763.4L1086.8 769.8L1099.2 776.1" fill="none" stroke="#b5b8bc" stroke-width="1" stroke-dasharray="3,2"/>
<path d="M1029.2 689.4L1041.8 683.3L1041.8 689.4L1115.0 689.4L1120.0 695.0L1125.8 703.8" fill="none" stroke="#b5b8bc" stroke-width="1" stroke-dasharray="3,2"/>
<path d="M1125.8 703.8L1118.3 720.3L1124.2 731.2L1114.2 737.7" fill="none" stroke="#b5b8bc" stroke-width="1" stroke-dasharray="3,2"/>
<path d="M922.4 609.3L932.2 616.2L926.3 633.9L920.4 653.6L919.4 677.2L919.4 694.9" fill="none" stroke="#b5b8bc" stroke-width="1" stroke-dasharray="3,2"/>
<path d="M834.8 579.7L859.4 566.0L871.2 566.0" fill="none" stroke="#b5b8bc" stroke-width="1" stroke-dasharray="3,2"/>
<path d="M879.1 549.2L865.3 582.7" fill="none" stroke="#b5b8bc" stroke-width="1" stroke-dasharray="3,2"/>
<path d="M461.0 500.3L461.8 508.0L466.8 515.7L472.3 523.3" fill="none" stroke="#b5b8bc" stroke-width="1" stroke-dasharray="3,2"/>
<path d="M539.8 497.7L539.8 523.3" fill="none" stroke="#b5b8bc" stroke-width="1" stroke-dasharray="3,2"/>
<path d="M680.9 497.7L680.9 523.3" fill="none" stroke="#b5b8bc" stroke-width="1" stroke-dasharray="3,2"/>
<path d="M786.3 497.7L786.3 513.6" fill="none" stroke="#b5b8bc" stroke-width="1" stroke-dasharray="3,2"/>
<path d="M1045.8 497.7L1045.8 560.7L1052.8 575.3L1066.1 585.0L1082.7 597.0L1097.6 606.6L1112.5 610.1L1129.1 608.9" fill="none" stroke="#b5b8bc" stroke-width="1" stroke-dasharray="3,2"/>
<path d="M319.1 523.3L786.3 523.3L786.3 513.6L792.2 515.7L794.6 528.3L808.8 532.1L822.0 535.4L833.7 540.9L845.3 547.1L858.6 543.4L878.5 548.3L885.1 545.9L898.4 542.1L918.3 552.1L944.9 570.5L957.3 574.1L964.0 585.0L972.3 589.8L978.9 598.2L996.3 612.5L997.7 666.4L995.5 675.9L987.2 682.7L985.5 688.3L993.8 695.0L1017.9 682.7L1039.5 675.9L1054.4 670.3L1053.6 660.0L1059.4 653.2L1087.6 652.0L1097.6 641.7L1105.1 635.9L1115.8 625.4L1125.8 620.7" fill="none" stroke="#a9adb1" stroke-width="1.3"/>
<path d="M319.9 523.6L324.6 529.1L322.2 538.6L316.0 543.3L310.0 545.0" fill="none" stroke="#a9adb1" stroke-width="1.3"/>
<path d="M421.6 887.4L461.5 883.6L460.0 888.2L522.1 910.8L569.5 910.8L569.5 902.1L597.4 902.1L604.6 909.5L613.7 917.2L623.7 924.0L627.8 934.6L631.1 941.3L637.8 947.0L646.9 951.8L651.4 956.1L656.0 951.8L660.2 947.0L663.5 940.7L672.6 940.3L682.6 941.3L689.2 946.1L694.2 955.6L700.0 965.0L705.8 974.5" fill="none" stroke="#a9adb1" stroke-width="1.3"/>
</svg>
<div class="a" style="left:315px;top:504px;width:795px;height:466px;overflow:hidden">
<div class="ml" style="left:-4px;top:55px">Washington</div><div class="ml" style="left:171px;top:53px">Montana</div><div class="ml" style="left:322px;top:47px">North Dakota</div><div class="ml" style="left:419px;top:86px">Minnesota</div><div class="ml" style="left:-13px;top:133px">Oregon</div><div class="ml" style="left:98px;top:141px">Idaho</div><div class="ml" style="left:205px;top:152px">Wyoming</div><div class="ml" style="left:324px;top:118px">South Dakota</div><div class="ml" style="left:501px;top:123px">Wisconsin</div><div class="ml" style="left:583px;top:141px">Michigan</div><div class="ml" style="left:337px;top:183px">Nebraska</div><div class="ml" style="left:441px;top:179px">Iowa</div><div class="ml" style="left:505px;top:220px">Illinois</div><div class="ml" style="left:559px;top:214px">Indiana</div><div class="ml" style="left:616px;top:217px">Ohio</div><div class="ml" style="left:699px;top:201px">Pennsylvania</div><div class="ml" style="left:51px;top:232px">Nevada</div><div class="ml" style="left:136px;top:234px">Utah</div><div class="ml" style="left:237px;top:249px">Colorado</div><div class="ml" style="left:354px;top:258px">Kansas</div><div class="ml" style="left:453px;top:248px">Missouri</div><div class="ml" style="left:647px;top:254px">West Virginia</div><div class="ml" style="left:575px;top:273px">Kentucky</div><div class="ml" style="left:686px;top:283px">Virginia</div><div class="ml" style="left:19px;top:291px">California</div><div class="ml" style="left:557px;top:310px">Tennessee</div><div class="ml" style="left:375px;top:327px">Oklahoma</div><div class="ml" style="left:455px;top:322px">Arkansas</div><div class="ml" style="left:136px;top:338px">Arizona</div><div class="ml" style="left:231px;top:335px">New Mexico</div><div class="ml" style="left:548px;top:361px">Alabama</div><div class="ml" style="left:610px;top:379px">Georgia</div><div class="ml" style="left:338px;top:389px">Texas</div><div class="ml" style="left:462px;top:407px">Louisiana</div><div class="ml" style="left:764px;width:auto;text-align:left;top:152px">New York</div><div class="ml" style="left:784px;width:auto;text-align:left;top:220px">New Jersey</div><div class="ml" style="left:768px;width:auto;text-align:left;top:250px">Delaware</div><div class="ml us" style="left:323px;top:219px">UNITED STATES</div><div class="ml us" style="left:323px;top:234px">OF AMERICA</div></div>
<svg class="a" style="left:315px;top:504px" width="795" height="466" viewBox="315 504 795 466"><circle cx="905" cy="695" r="17" fill="url(#hs)"/><circle cx="341.5" cy="785.5" r="17" fill="url(#hs)"/><circle cx="406.5" cy="857.5" r="17" fill="url(#hs)"/><circle cx="1084.5" cy="758.5" r="17" fill="url(#hs)"/><circle cx="385" cy="590" r="11" fill="url(#hs2)"/></svg><!--/MAP-->
<div class="t" style="left:319.5px;top:470.5px;font-size:13.4px;letter-spacing:-0.4px;font-weight:bold;color:#111">Energy Consumption Heat Map</div>
<div class="t" style="left:1132px;top:470.5px;font-size:13.4px;letter-spacing:-0.4px;font-weight:bold;color:#111">Consumption Costs</div>
<div class="t" style="left:1132px;top:863.5px;font-size:13.4px;letter-spacing:-0.4px;font-weight:bold;color:#111">Total Energy (kW) Consumed By Building Type</div>
<svg class="a" style="left:1120px;top:500px" width="700" height="330" viewBox="1120 500 700 330"><line x1="1211" y1="536.5" x2="1774" y2="536.5" stroke="#cfcfcf" stroke-width="1" stroke-dasharray="2,3"/><line x1="1211" y1="619" x2="1774" y2="619" stroke="#cfcfcf" stroke-width="1" stroke-dasharray="2,3"/><line x1="1211" y1="701.5" x2="1774" y2="701.5" stroke="#cfcfcf" stroke-width="1" stroke-dasharray="2,3"/><line x1="1211" y1="784.5" x2="1774" y2="784.5" stroke="#d0d0d0" stroke-width="1.2"/><rect x="1235.00" y="598.02" width="35.8" height="185.98" fill="#69dfc6"/><rect x="1235.00" y="776.00" width="35.8" height="8" fill="#6f8ded"/><rect x="1278.85" y="610.36" width="35.8" height="173.64" fill="#69dfc6"/><rect x="1278.85" y="777.00" width="35.8" height="7" fill="#6f8ded"/><rect x="1322.70" y="583.12" width="35.8" height="200.88" fill="#69dfc6"/><rect x="1322.70" y="777.00" width="35.8" height="7" fill="#6f8ded"/><rect x="1366.55" y="571.58" width="35.8" height="212.42" fill="#69dfc6"/><rect x="1366.55" y="778.00" width="35.8" height="6" fill="#6f8ded"/><rect x="1410.40" y="564.84" width="35.8" height="219.16" fill="#69dfc6"/><rect x="1410.40" y="778.00" width="35.8" height="6" fill="#6f8ded"/><rect x="1454.25" y="554.86" width="35.8" height="229.14" fill="#69dfc6"/><rect x="1454.25" y="777.60" width="35.8" height="6.4" fill="#6f8ded"/><rect x="1498.10" y="539.33" width="35.8" height="244.67" fill="#69dfc6"/><rect x="1498.10" y="776.60" width="35.8" height="7.4" fill="#6f8ded"/><rect x="1541.95" y="557.11" width="35.8" height="226.89" fill="#69dfc6"/><rect x="1541.95" y="776.60" width="35.8" height="7.4" fill="#6f8ded"/><rect x="1585.80" y="561.26" width="35.8" height="222.74" fill="#69dfc6"/><rect x="1585.80" y="778.00" width="35.8" height="6" fill="#6f8ded"/><rect x="1629.65" y="575.62" width="35.8" height="208.38" fill="#69dfc6"/><rect x="1629.65" y="778.60" width="35.8" height="5.4" fill="#6f8ded"/><rect x="1673.50" y="590.25" width="35.8" height="193.75" fill="#69dfc6"/><rect x="1673.50" y="777.00" width="35.8" height="7" fill="#6f8ded"/><rect x="1717.35" y="593.08" width="35.8" height="190.92" fill="#69dfc6"/><rect x="1717.35" y="775.60" width="35.8" height="8.4" fill="#6f8ded"/></svg>
<div class="t" style="left:1213.00px;width:80px;text-align:center;top:584.5px;font-size:11px;color:#333">$449,231.62</div>
<div class="t" style="left:1223.00px;width:60px;text-align:center;top:790.5px;font-size:12px;color:#222">Jan</div>
<div class="t" style="left:1256.85px;width:80px;text-align:center;top:571.5px;font-size:11px;color:#333">$419,419.52</div>
<div class="t" style="left:1266.85px;width:60px;text-align:center;top:790.5px;font-size:12px;color:#222">Feb</div>
<div class="t" style="left:1300.70px;width:80px;text-align:center;top:558.5px;font-size:11px;color:#333">$485,206.57</div>
<div class="t" style="left:1310.70px;width:60px;text-align:center;top:790.5px;font-size:12px;color:#222">Mar</div>
<div class="t" style="left:1344.55px;width:80px;text-align:center;top:545.5px;font-size:11px;color:#333">$513,096.44</div>
<div class="t" style="left:1354.55px;width:60px;text-align:center;top:790.5px;font-size:12px;color:#222">Apr</div>
<div class="t" style="left:1388.40px;width:80px;text-align:center;top:532.5px;font-size:11px;color:#333">$529,360.76</div>
<div class="t" style="left:1398.40px;width:60px;text-align:center;top:790.5px;font-size:12px;color:#222">May</div>
<div class="t" style="left:1432.25px;width:80px;text-align:center;top:519.5px;font-size:11px;color:#333">$553,479.31</div>
<div class="t" style="left:1442.25px;width:60px;text-align:center;top:790.5px;font-size:12px;color:#222">Jun</div>
<div class="t" style="left:1486.10px;width:60px;text-align:center;top:790.5px;font-size:12px;color:#222">Jul</div>
<div class="t" style="left:1519.95px;width:80px;text-align:center;top:543.5px;font-size:11px;color:#333">$548,050.07</div>
<div class="t" style="left:1529.95px;width:60px;text-align:center;top:790.5px;font-size:12px;color:#222">Aug</div>
<div class="t" style="left:1563.80px;width:80px;text-align:center;top:530.5px;font-size:11px;color:#333">$538,007.95</div>
<div class="t" style="left:1573.80px;width:60px;text-align:center;top:790.5px;font-size:12px;color:#222">Sep</div>
<div class="t" style="left:1607.65px;width:80px;text-align:center;top:562.5px;font-size:11px;color:#333">$503,345.30</div>
<div class="t" style="left:1617.65px;width:60px;text-align:center;top:790.5px;font-size:12px;color:#222">Oct</div>
<div class="t" style="left:1651.50px;width:80px;text-align:center;top:576.5px;font-size:11px;color:#333">$468,006.60</div>
<div class="t" style="left:1661.50px;width:60px;text-align:center;top:790.5px;font-size:12px;color:#222">Nov</div>
<div class="t" style="left:1695.35px;width:80px;text-align:center;top:563.5px;font-size:11px;color:#333">$461,160.03</div>
<div class="t" style="left:1705.35px;width:60px;text-align:center;top:790.5px;font-size:12px;color:#222">Dec</div>
<div class="t" style="left:1104px;width:100px;text-align:right;top:530.5px;font-size:12px;color:#222">$600,000</div>
<div class="t" style="left:1104px;width:100px;text-align:right;top:613.0px;font-size:12px;color:#222">$400,000</div>
<div class="t" style="left:1104px;width:100px;text-align:right;top:695.5px;font-size:12px;color:#222">$200,000</div>
<div class="t" style="left:1104px;width:100px;text-align:right;top:778.0px;font-size:12px;color:#222">$0</div>
<div class="t" style="left:1090px;width:100px;text-align:center;top:642px;font-size:12.5px;color:#222;transform:rotate(-90deg)">Total Energy Cost</div>
<svg class="a" style="left:1136px;top:584px" width="10" height="12" viewBox="0 0 10 12"><path d="M3 1.5 L7.5 6 L3 10.5" stroke="#555" stroke-width="1.1" fill="none"/></svg>
<div class="t" style="left:1431px;top:809px;font-size:12.3px;color:#222">Month of Reading Date</div>
<svg class="a" style="left:1560.5px;top:811px" width="12" height="10" viewBox="0 0 12 10"><path d="M1.5 3 L6 7.5 L10.5 3" stroke="#444" stroke-width="1.1" fill="none"/></svg>
<div class="a" style="left:1788px;top:510.5px;width:14px;height:14px;border:1.2px solid #666;border-radius:1px;background:#fff"></div><div class="t" style="left:1790.5px;top:512px;font-size:11px;color:#333">&#10003;</div><div class="t" style="left:1806px;top:512px;font-size:12.4px;color:#555">Building Type</div>
<div class="a" style="left:1788px;top:532px;width:14px;height:14px;background:#6b8cef;border-radius:1px"></div><div class="t" style="left:1790.5px;top:534px;font-size:11px;color:#fff">&#10003;</div><div class="t" style="left:1806px;top:533.5px;font-size:12.4px;color:#111">Office</div>
<div class="a" style="left:1788px;top:554px;width:14px;height:14px;background:#6cdfc4;border-radius:1px"></div><div class="t" style="left:1790.5px;top:556px;font-size:11px;color:#fff">&#10003;</div><div class="t" style="left:1806px;top:555px;font-size:12.4px;color:#111">Retail</div>
<div class="a" style="left:1120px;top:850px;width:780px;height:120px;overflow:hidden"><svg class="a" style="left:0;top:0" width="780" height="120" viewBox="1120 850 780 120"><circle cx="1502" cy="1074.5" r="144.6" fill="#69dfc6"/><path d="M1525 930.5 L1525 924.5 L1653 924.5" fill="none" stroke="#6cdfc4" stroke-width="1"/><path d="M1660 913.5 L1732 913.5 Q1735 913.5 1735 916.5 L1735 932.5 Q1735 935.5 1732 935.5 L1660 935.5 Q1657 935.5 1657 932.5 L1657 927.5 L1653 924.5 L1657 921.5 L1657 916.5 Q1657 913.5 1660 913.5 Z" fill="#fff" stroke="#6cdfc4" stroke-width="1"/></svg></div>
<div class="t" style="left:1507px;top:951px;font-size:10.9px;color:#333">90.5%</div>
<div class="t" style="left:1661px;top:918px;font-size:12px;color:#111">48884318.20</div>
<svg class="a" style="left:1822px;top:972.5px" width="19.5" height="18.5" viewBox="0 0 38 36"><g stroke-width="2.2" fill="none"><path d="M7.4 13.1 L18.8 13.5 M7.4 13.1 L7.4 24.5 M29.8 12.4 L29.8 23.8 L18.4 23.8" stroke="#7d7d7d"/><path d="M13.1 7.8 L24.1 7.4 L24.1 19.1" stroke="#2f78c8"/><path d="M13.5 17.7 L13.5 29.4 L24.5 29.4" stroke="#7a1616"/></g><g fill="#7d7d7d"><circle cx="7.4" cy="13.1" r="2.9"/><circle cx="18.8" cy="13.5" r="2.9"/><circle cx="7.4" cy="24.5" r="2.9"/><circle cx="29.8" cy="12.4" r="2.9"/><circle cx="29.8" cy="23.8" r="2.9"/><circle cx="18.4" cy="23.8" r="2.9"/></g><circle cx="13.1" cy="7.8" r="3" fill="#2f7ccf"/><circle cx="24.1" cy="7.4" r="3" fill="#2f7ccf"/><circle cx="24.1" cy="19.1" r="3" fill="#1b3fc0"/><circle cx="13.5" cy="17.7" r="2.9" fill="#d42424"/><circle cx="13.5" cy="29.4" r="3" fill="#7a1616"/><circle cx="24.5" cy="29.4" r="3" fill="#7a1616"/></svg><div class="t" style="left:1840.5px;top:978.5px;font-size:7.3px;font-weight:bold;color:#777;letter-spacing:0px">ioX-Connect</div><div class="t" style="left:1880.5px;top:981.5px;font-size:4px;color:#888">&reg;</div>
<div class="a" style="left:1873.3px;top:930.2px;width:49.6px;height:49.6px;border-radius:50%;background:#ff5a00;box-shadow:0 2px 6px rgba(0,0,0,.28)"></div><div class="a" style="left:1891.8px;top:953.8px;width:12.6px;height:2.4px;background:#fff"></div><div class="a" style="left:1896.9px;top:948.7px;width:2.4px;height:12.6px;background:#fff"></div>
</body></html>
